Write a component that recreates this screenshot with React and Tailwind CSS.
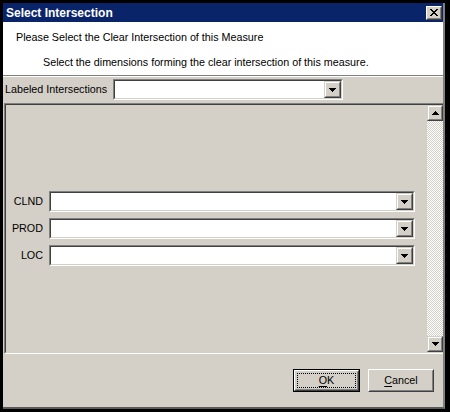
import React from "react";

const rowsDown = [
  [0, 7],
  [1, 5],
  [2, 3],
  [3, 1],
];

function Tri({ dir = "down" }) {
  return (
    <svg width="7" height="4" viewBox="0 0 7 4" shapeRendering="crispEdges" className="block">
      {rowsDown.map(([i, w], k) => (
        <rect key={k} x={i} y={dir === "down" ? k : 3 - k} width={w} height="1" fill="#000" />
      ))}
    </svg>
  );
}

const xRows = [
  [[0, 2], [6, 2]],
  [[1, 2], [5, 2]],
  [[2, 4]],
  [[3, 2]],
  [[2, 4]],
  [[1, 2], [5, 2]],
  [[0, 2], [6, 2]],
];

function XGlyph() {
  return (
    <svg width="8" height="7" viewBox="0 0 8 7" shapeRendering="crispEdges" className="block">
      {xRows.map((segs, y) =>
        segs.map(([x, w], k) => <rect key={y + "-" + k} x={x} y={y} width={w} height="1" fill="#000" />)
      )}
    </svg>
  );
}

function Raised({ className = "", children }) {
  return (
    <div className={"border border-t-[#d4d0c8] border-l-[#d4d0c8] border-r-[#404040] border-b-[#404040] bg-[#d4d0c8] " + className}>
      <div className="w-full h-full border border-t-white border-l-white border-r-[#808080] border-b-[#808080] flex items-center justify-center">
        {children}
      </div>
    </div>
  );
}

function Combo({ className = "" }) {
  return (
    <div className={"h-[21px] border border-t-[#808080] border-l-[#808080] border-r-white border-b-white " + className}>
      <div className="w-full h-full border border-t-[#404040] border-l-[#404040] border-r-[#d4d0c8] border-b-[#d4d0c8] bg-white flex justify-end">
        <Raised className="w-[17px] h-full">
          <Tri dir="down" />
        </Raised>
      </div>
    </div>
  );
}

export default function App() {
  return (
    <div className="w-[450px] h-[412px] bg-black pt-[3px] pl-[3px] pr-[5px] pb-[3px] font-['Liberation_Sans',Arial,sans-serif] text-[10.75px] text-black">
      <div className="h-full bg-[#d4d0c8] border-r-2 border-r-[#808080] border-b-2 border-b-[#5a5a5a] flex flex-col">
        {/* Title bar */}
        <div className="h-[19px] shrink-0 bg-[#0a246a] flex items-center justify-between pl-[3px] pr-[1px]">
          <span className="text-white font-bold text-[12px] leading-none">Select Intersection</span>
          <div className="w-[16px] h-[14px] border border-t-white border-l-white border-r-[#404040] border-b-[#404040] bg-[#d4d0c8]">
            <div className="w-full h-full border border-t-[#d4d0c8] border-l-[#d4d0c8] border-r-[#808080] border-b-[#808080] flex items-center justify-center">
              <XGlyph />
            </div>
          </div>
        </div>

        {/* Header */}
        <div className="h-[54px] shrink-0 bg-white border-b border-b-[#808080]">
          <div className="pt-[9px] pl-[13px] leading-[13px]">Please Select the Clear Intersection of this Measure</div>
          <div className="mt-[12px] pl-[40px] leading-[13px]">Select the dimensions forming the clear intersection of this measure.</div>
        </div>
        <div className="h-[1px] shrink-0 bg-white" />

        {/* Labeled intersections row */}
        <div className="h-[23px] shrink-0 pt-[2px] pl-[2px] flex items-start">
          <div className="w-[108px] h-[21px] flex items-center whitespace-nowrap">Labeled Intersections</div>
          <Combo className="w-[230px]" />
        </div>

        {/* Panel */}
        <div className="mt-[3px] ml-[1px] h-[251px] shrink-0 border-t border-l border-b border-t-[#808080] border-l-[#808080] border-b-white">
          <div className="h-full border-t border-l border-b border-t-[#404040] border-l-[#404040] border-b-[#d4d0c8] flex">
            <div className="flex-1 pt-[86px] flex flex-col gap-[6px]">
              {["CLND", "PROD", "LOC"].map((l) => (
                <div key={l} className="flex items-center">
                  <div className="w-[37px] text-right leading-[21px]">{l}</div>
                  <Combo className="ml-[6px] w-[366px]" />
                </div>
              ))}
            </div>
            <div className="w-[16px] flex flex-col">
              <Raised className="w-[16px] h-[16px] shrink-0">
                <Tri dir="up" />
              </Raised>
              <div className="flex-1 bg-[image:repeating-conic-gradient(#ffffff_0%_25%,#d4d0c8_0%_50%)] bg-[length:2px_2px]" />
              <Raised className="w-[16px] h-[16px] shrink-0">
                <Tri dir="down" />
              </Raised>
            </div>
          </div>
        </div>

        {/* Buttons */}
        <div className="flex-1 flex justify-end items-start pt-[15px] pr-[9px] gap-[8px]">
          <div className="w-[67px] h-[23px] border border-black bg-[#d4d0c8]">
            <div className="h-full border border-t-white border-l-white border-r-[#404040] border-b-[#404040]">
              <div className="h-full border border-t-[#d4d0c8] border-l-[#d4d0c8] border-r-[#808080] border-b-[#808080] p-[1px]">
                <div className="h-full border border-dotted border-black flex items-center justify-center leading-none">
                  <span>
                    <span className="underline underline-offset-2">O</span>K
                  </span>
                </div>
              </div>
            </div>
          </div>
          <div className="w-[66px] h-[23px] border border-t-white border-l-white border-r-[#404040] border-b-[#404040] bg-[#d4d0c8]">
            <div className="h-full border border-t-[#d4d0c8] border-l-[#d4d0c8] border-r-[#808080] border-b-[#808080] flex items-center justify-center leading-none">
              <span>
                <span className="underline underline-offset-2">C</span>ancel
              </span>
            </div>
          </div>
        </div>
      </div>
    </div>
  );
}
